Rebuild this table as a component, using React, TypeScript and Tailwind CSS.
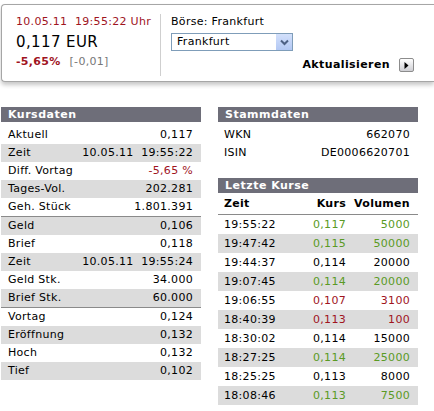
const kursdaten: { label: string; value: string; red?: boolean; divider?: boolean }[] = [
  { label: "Aktuell", value: "0,117" },
  { label: "Zeit", value: "10.05.11\u00a0\u00a019:55:22" },
  { label: "Diff. Vortag", value: "-5,65 %", red: true },
  { label: "Tages-Vol.", value: "202.281" },
  { label: "Geh. Stück", value: "1.801.391", divider: true },
  { label: "Geld", value: "0,106" },
  { label: "Brief", value: "0,118" },
  { label: "Zeit", value: "10.05.11\u00a0\u00a019:55:24" },
  { label: "Geld Stk.", value: "34.000" },
  { label: "Brief Stk.", value: "60.000", divider: true },
  { label: "Vortag", value: "0,124" },
  { label: "Eröffnung", value: "0,132" },
  { label: "Hoch", value: "0,132" },
  { label: "Tief", value: "0,102" },
];

type Trend = "up" | "down" | "flat";

const kurse: { time: string; kurs: string; vol: string; trend: Trend }[] = [
  { time: "19:55:22", kurs: "0,117", vol: "5000", trend: "up" },
  { time: "19:47:42", kurs: "0,115", vol: "50000", trend: "up" },
  { time: "19:44:37", kurs: "0,114", vol: "20000", trend: "flat" },
  { time: "19:07:45", kurs: "0,114", vol: "20000", trend: "up" },
  { time: "19:06:55", kurs: "0,107", vol: "3100", trend: "down" },
  { time: "18:40:39", kurs: "0,113", vol: "100", trend: "down" },
  { time: "18:30:02", kurs: "0,114", vol: "15000", trend: "flat" },
  { time: "18:27:25", kurs: "0,114", vol: "25000", trend: "up" },
  { time: "18:25:25", kurs: "0,113", vol: "8000", trend: "flat" },
  { time: "18:08:46", kurs: "0,113", vol: "7500", trend: "up" },
];

const trendColor: Record<Trend, string> = {
  up: "text-[#5a9a24]",
  down: "text-[#a0141e]",
  flat: "text-black",
};

const SectionHeader = ({ title }: { title: string }) => (
  <div className="h-[15px] bg-[#6e6e79] pl-[7px] text-[11px] font-bold leading-[15px] tracking-[0.5px] text-white">
    {title}
  </div>
);

const QuoteBox = () => (
  <div className="ml-px mt-[4px] flex h-[78px] rounded-l-[4px] border border-r-0 border-[#a6a6a6] bg-white shadow-[0_3px_4px_rgba(0,0,0,0.22)]">
    <div className="w-[158px] pl-[14px] pt-[10px]">
      <div className="h-[13px] text-[11px] leading-[13px] text-[#a0141e]">
        10.05.11&nbsp;&nbsp;19:55:22 Uhr
      </div>
      <div className="mt-[4px] h-[20px] text-[15px] leading-[20px] tracking-[0.4px] text-black">
        0,117 EUR
      </div>
      <div className="mt-[2px] flex h-[16px] items-center gap-[9px] text-[11px] leading-[16px]">
        <span className="font-bold text-[#a0141e]">-5,65%</span>
        <span className="text-[#777]">[-0,01]</span>
      </div>
    </div>
    <div className="mt-[9px] h-[62px] w-px bg-[#cfcfcf]" />
    <div className="flex flex-1 flex-col pl-[10px] pt-[10px]">
      <div className="h-[13px] text-[11px] leading-[13px] text-black">Börse: Frankfurt</div>
      <div className="mt-[5px] flex h-[18px] w-[122px] items-center border border-[#7f9db9] bg-white">
        <span className="flex-1 pl-[5px] text-[11px] leading-[16px] text-black">Frankfurt</span>
        <span className="flex h-[16px] w-[16px] items-center justify-center bg-gradient-to-b from-[#d3e0fb] to-[#b3c8f4]">
          <svg width="9" height="7" viewBox="0 0 9 7">
            <path d="M1 1.5 L4.5 5 L8 1.5" fill="none" stroke="#4d6185" strokeWidth="2" />
          </svg>
        </span>
      </div>
      <div className="mt-[7px] flex items-center justify-end gap-[9px] pr-[20px]">
        <span className="text-[11px] font-bold leading-[14px] tracking-[0.4px] text-black">
          Aktualisieren
        </span>
        <span className="flex h-[14px] w-[15px] items-center justify-center rounded-[2px] border border-[#8c8c8c] bg-gradient-to-b from-white to-[#cfcfd4]">
          <svg width="5" height="7" viewBox="0 0 5 7">
            <path d="M0.5 0 L4.5 3.5 L0.5 7 Z" fill="#000" />
          </svg>
        </span>
      </div>
    </div>
  </div>
);

const Kursdaten = () => (
  <div className="w-[200px]">
    <SectionHeader title="Kursdaten" />
    <div className="pt-[4px]">
      {kursdaten.map((row, i) => (
        <div
          key={i}
          className={`flex h-[18px] items-center justify-between pl-[7px] pr-[8px] text-[11px] leading-[18px] ${
            i % 2 === 1 ? "bg-[#dcdcdc]" : "bg-white"
          } ${row.divider ? "box-content border-b border-[#8a8a8a]" : ""}`}
        >
          <span className="text-black">{row.label}</span>
          <span className={row.red ? "text-[#a0141e]" : "text-black"}>{row.value}</span>
        </div>
      ))}
    </div>
  </div>
);

const RightColumn = () => (
  <div className="w-[200px]">
    <SectionHeader title="Stammdaten" />
    <div className="pt-[4px]">
      {[
        ["WKN", "662070"],
        ["ISIN", "DE0006620701"],
      ].map(([label, value]) => (
        <div
          key={label}
          className="flex h-[18px] items-center justify-between pl-[6px] pr-[8px] text-[11px] leading-[18px] text-black"
        >
          <span>{label}</span>
          <span>{value}</span>
        </div>
      ))}
    </div>

    <div className="mt-[16px]">
      <SectionHeader title="Letzte Kurse" />
      <div className="flex h-[22px] items-end border-b border-[#8a8a8a] pb-[3px] pl-[6px] pr-[8px] text-[11px] font-bold leading-[14px] text-black">
        <span className="w-[72px]">Zeit</span>
        <span className="w-[50px] text-right">Kurs</span>
        <span className="w-[64px] text-right">Volumen</span>
      </div>
      {kurse.map((row, i) => (
        <div
          key={i}
          className={`flex h-[19px] items-center pl-[6px] pr-[8px] text-[11px] leading-[19px] ${
            i % 2 === 1 ? "bg-[#dcdcdc]" : "bg-white"
          }`}
        >
          <span className="w-[72px] text-black">{row.time}</span>
          <span className={`w-[50px] text-right ${trendColor[row.trend]}`}>{row.kurs}</span>
          <span className={`w-[64px] text-right ${trendColor[row.trend]}`}>{row.vol}</span>
        </div>
      ))}
    </div>
  </div>
);

export default function App() {
  return (
    <div className="h-[411px] w-[434px] overflow-hidden bg-white font-['DejaVu_Sans',Verdana,sans-serif] tracking-[0.3px]">
      <QuoteBox />
      <div className="ml-px mt-[25px] flex gap-[17px]">
        <Kursdaten />
        <RightColumn />
      </div>
    </div>
  );
}
